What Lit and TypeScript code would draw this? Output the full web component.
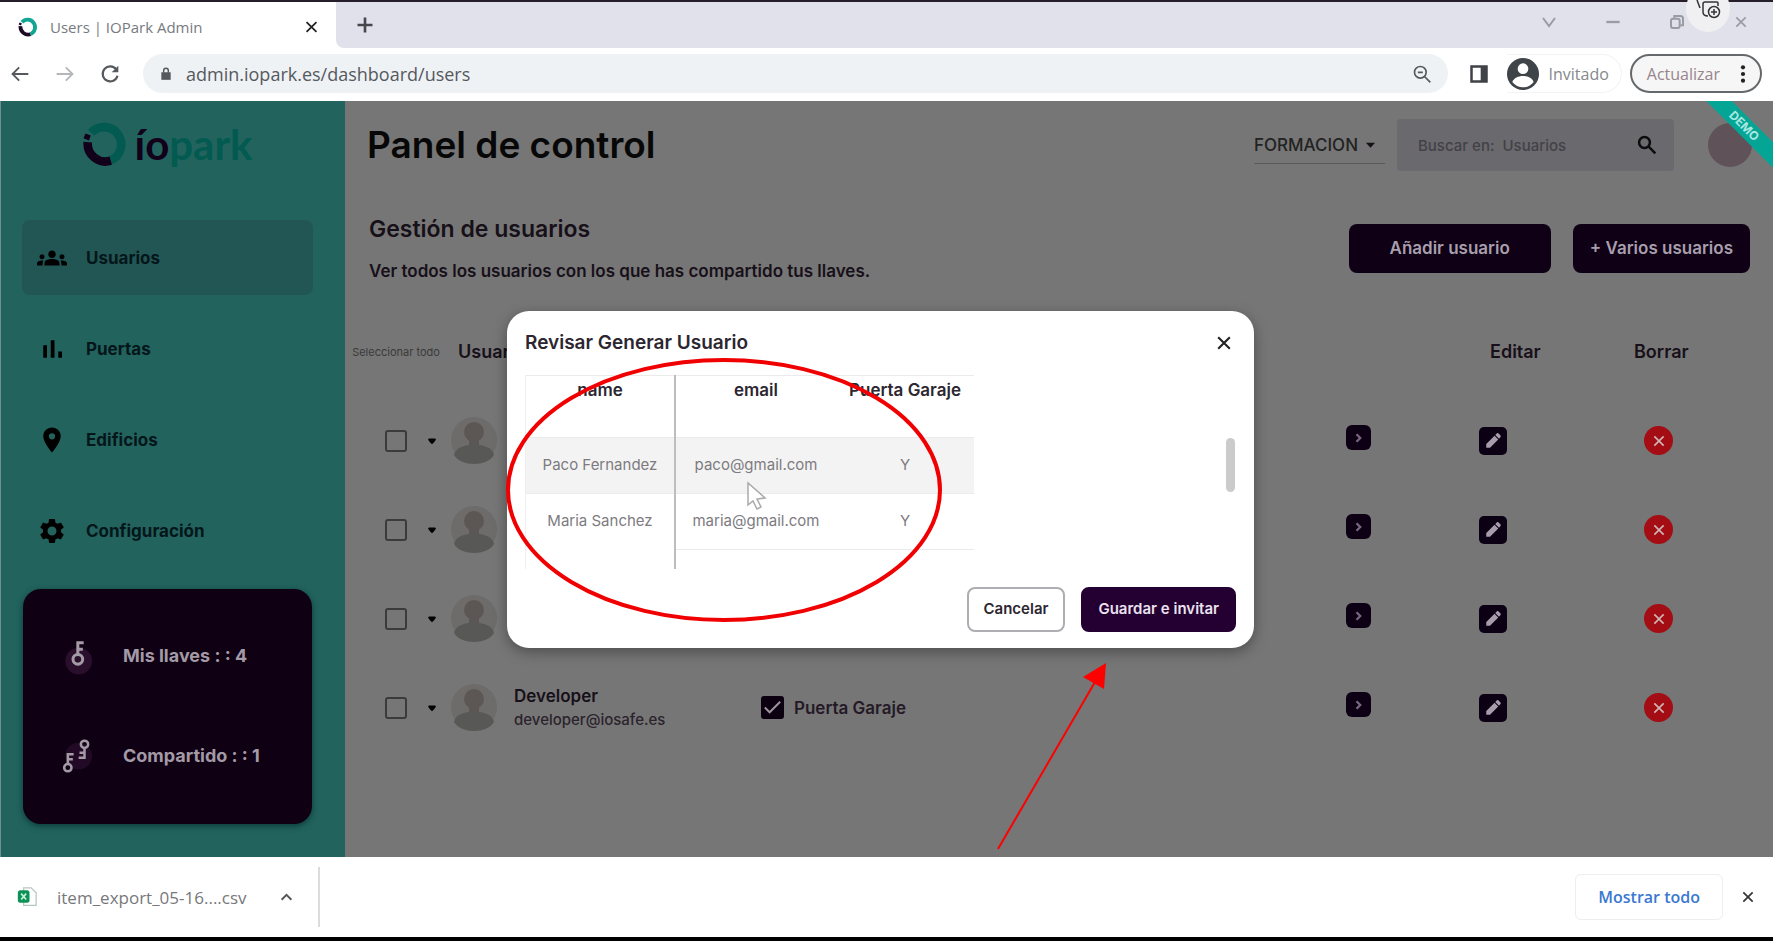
import { LitElement, html, css, svg, nothing } from "lit";
import { customElement } from "lit/decorators.js";

const NAV = [
  { label: "Usuarios", icon: "group", active: true },
  { label: "Puertas", icon: "bars", active: false },
  { label: "Edificios", icon: "pin", active: false },
  { label: "Configuración", icon: "gear", active: false },
];

const KEYS = [
  { label: "Mis llaves : : 4", icon: "key" },
  { label: "Compartido : : 1", icon: "keys" },
];

const USERS = [
  { name: "", email: "", door: "" },
  { name: "", email: "", door: "" },
  { name: "", email: "", door: "" },
  { name: "Developer", email: "developer@iosafe.es", door: "Puerta Garaje" },
];

const INVITES = [
  { name: "Paco Fernandez", email: "paco@gmail.com", door: "Y" },
  { name: "Maria Sanchez", email: "maria@gmail.com", door: "Y" },
];

const PATHS: Record<string, unknown> = {
  group: svg`<path fill="currentColor" d="M12 12.75c1.63 0 3.07.39 4.24.9 1.08.48 1.76 1.56 1.76 2.73V18H6v-1.61c0-1.18.68-2.26 1.76-2.73 1.17-.52 2.61-.91 4.24-.91zM4 13c1.100 0 2-.9 2-2s-.9-2-2-2-2 .9-2 2 .9 2 2 2zm1.130 1.100C4.760 14.040 4.390 14 4 14c-.99 0-1.930.210-2.780.580C.48 14.900 0 15.620 0 16.430V18h4.500v-1.610c0-.830.230-1.610.630-2.290zM20 13c1.100 0 2-.9 2-2s-.9-2-2-2-2 .9-2 2 .9 2 2 2zm4 3.430c0-.810-.480-1.530-1.220-1.850-.850-.370-1.790-.580-2.780-.580-.390 0-.760.040-1.130.100.400.680.630 1.460.630 2.290V18H24v-1.570zM12 6c1.660 0 3 1.340 3 3s-1.340 3-3 3-3-1.340-3-3 1.340-3 3-3z"/>`,
  bars: svg`<path fill="currentColor" d="M5 9h3v10H5zM11 5h3v14h-3zM17 14h3v5h-3z"/>`,
  pin: svg`<path fill="currentColor" d="M12 2C8.130 2 5 5.130 5 9c0 5.250 7 13 7 13s7-7.750 7-13c0-3.870-3.130-7-7-7zm0 9.500a2.500 2.500 0 1 1 0-5 2.500 2.500 0 0 1 0 5z"/>`,
  gear: svg`<path fill="currentColor" d="M19.140 12.940c.040-.3.060-.610.060-.940 0-.320-.020-.640-.070-.940l2.030-1.580c.180-.140.230-.410.120-.610l-1.920-3.320c-.120-.220-.370-.290-.590-.220l-2.390.960c-.5-.380-1.030-.7-1.620-.940l-.360-2.540c-.040-.240-.240-.410-.480-.410h-3.840c-.240 0-.430.170-.470.410l-.360 2.540c-.590.240-1.130.570-1.620.940l-2.390-.960c-.220-.080-.470 0-.590.220L2.740 8.870c-.120.210-.080.470.120.610l2.030 1.580c-.050.3-.090.630-.090.940s.020.640.070.940l-2.030 1.580c-.180.140-.230.410-.120.610l1.920 3.320c.120.220.370.290.590.220l2.390-.960c.5.380 1.030.7 1.620.940l.360 2.540c.050.240.240.410.480.410h3.840c.240 0 .440-.170.470-.410l.360-2.540c.590-.240 1.130-.560 1.620-.940l2.390.960c.220.080.470 0 .590-.220l1.920-3.320c.120-.220.070-.470-.120-.610l-2.010-1.580zM12 15.600A3.600 3.600 0 1 1 12 8.400a3.600 3.600 0 0 1 0 7.200z"/>`,
  key: svg`<circle cx="13" cy="15" r="8" fill="#2a0f2c"/><g fill="none" stroke="currentColor" stroke-width="1.800"><circle cx="12.500" cy="14" r="2.900"/><path d="M12.500 11V4h3.500M12.500 8h3"/></g>`,
  keys: svg`<circle cx="13" cy="12" r="8" fill="#220a26"/><g fill="none" stroke="currentColor" stroke-width="1.500"><circle cx="6.500" cy="19" r="2.200"/><path d="M6.500 17v-6H10M6.500 14h3"/><circle cx="16.500" cy="5" r="2.200"/><path d="M16.500 7v6H13M16.500 10h-3"/></g>`,
  close: svg`<path fill="none" stroke="currentColor" stroke-width="2.500" d="M5 5l14 14M19 5L5 19"/>`,
  plus: svg`<path fill="none" stroke="currentColor" stroke-width="3.500" d="M12 2v20M2 12h20"/>`,
  back: svg`<path fill="none" stroke="currentColor" stroke-width="2.200" d="M22 12H3M11 4l-8 8 8 8"/>`,
  forward: svg`<path fill="none" stroke="currentColor" stroke-width="2.200" d="M2 12h19M13 4l8 8-8 8"/>`,
  reload: svg`<path fill="none" stroke="currentColor" stroke-width="2.600" d="M19.500 6.500A9 9 0 1 0 21 14"/><path fill="currentColor" d="M22 2v8h-8z"/>`,
  lock: svg`<path fill="currentColor" d="M4 9h16v13H4z"/><path fill="none" stroke="currentColor" stroke-width="2.500" d="M8 10V6a4 4 0 0 1 8 0v4"/>`,
  lens: svg`<g fill="none" stroke="currentColor" stroke-width="2"><circle cx="10" cy="10" r="7"/><path d="M15 15l7 7M7 10h6"/></g>`,
  search: svg`<g fill="none" stroke="currentColor" stroke-width="3"><circle cx="9" cy="9" r="6.500"/><path d="M14 14l8 8"/></g>`,
  panel: svg`<path fill="none" stroke="currentColor" stroke-width="3" d="M3 3h18v18H3z"/><path fill="currentColor" d="M14 3h7v18h-7z"/>`,
  person: svg`<circle cx="12" cy="12" r="12" fill="currentColor"/><circle cx="12" cy="8" r="4" fill="#fff"/><path fill="#fff" d="M4 18c2-6 14-6 16 0a10 10 0 0 1-16 0z"/>`,
  dots: svg`<g fill="currentColor"><circle cx="12" cy="4" r="2.500"/><circle cx="12" cy="12" r="2.500"/><circle cx="12" cy="20" r="2.500"/></g>`,
  down: svg`<path fill="none" stroke="currentColor" stroke-width="3" d="M3 6l9 12 9-12"/>`,
  up: svg`<path fill="none" stroke="currentColor" stroke-width="3.500" d="M3 17l9-9 9 9"/>`,
  right: svg`<path fill="none" stroke="currentColor" stroke-width="3" d="M10 7l5 5-5 5"/>`,
  minus: svg`<path fill="none" stroke="currentColor" stroke-width="3.500" d="M2 12h20"/>`,
  restore: svg`<g fill="none" stroke="currentColor" stroke-width="3"><rect x="3" y="7" width="13" height="14" rx="3"/><path d="M8 6V3h9a4 4 0 0 1 4 4v10h-4"/></g>`,
  caret: svg`<path fill="currentColor" d="M2 7h20L12 18z"/>`,
  dropdown: svg`<path fill="currentColor" d="M3 8q0-2 3-2h12q3 0 3 2 0 4-9 12Q3 12 3 8z"/>`,
  pencil: svg`<path fill="currentColor" d="M3 21v-5L14 5l5 5L8 21zM15 4l2-2c1-1 2-.5 2.500 0L22 4.500c.5.500.5 1.500 0 2L20 9z"/>`,
  avatar: svg`<circle cx="24" cy="23" r="23" fill="#6d6c6b"/><circle cx="24" cy="15" r="10" fill="#5c5755"/><path fill="#5c5755" d="M19 20h10v9H19z"/><path fill="#585857" d="M4 38c2-14 38-14 40 0-7 12-33 12-40 0z"/>`,
  csv: svg`<path fill="#fff" stroke="#b9c6c0" stroke-width="1.500" d="M8 1h9l6 6v15H8z"/><rect x="1" y="4" width="14" height="15" rx="3" fill="#0d9255"/><path fill="none" stroke="#c9f0dc" stroke-width="2" d="M5 8l6 7M11 8l-6 7"/>`,
  ring: svg`<g fill="none"><path stroke="var(--ring)" stroke-width="4.500" d="M4.800 6.200A9 9 0 1 1 15 20.500"/><path stroke="var(--ring-dark)" stroke-width="4.500" d="M3 11A9.300 9.300 0 0 0 15 20.700"/><path stroke="var(--ring-dark)" stroke-width="3" d="M2.200 9.600l1-2.600"/></g>`,
};

const icon = (name: string, cls = "", box = "0 0 24 24") =>
  html`<svg class="ico ${cls}" viewBox=${box} aria-hidden="true">${PATHS[name]}</svg>`;

const base = css`
  * {
    box-sizing: border-box;
  }
  button {
    font: inherit;
    color: inherit;
    background: none;
    border: 0;
    padding: 0;
    display: inline-flex;
    align-items: center;
    justify-content: center;
  }
  a {
    color: inherit;
    text-decoration: none;
  }
  .ico {
    width: 20px;
    height: 20px;
    flex: none;
    display: block;
  }
`;

@customElement("browser-bar")
class BrowserBar extends LitElement {
  static styles = [
    base,
    css`
      :host {
        display: block;
        border-top: 2px solid #261e2b;
        font: 16px "Open Sans", sans-serif;
        color: #55585c;
      }
      .strip {
        position: relative;
        display: flex;
        height: 46px;
        background: #fff;
      }
      .tab {
        width: 336px;
        display: flex;
        align-items: center;
        padding: 4px 16px 0 18px;
        background: #fff;
        gap: 12px;
        color: #777a80;
        --ring: #12a594;
        --ring-dark: #1d0b26;
      }
      .tab-title {
        flex: 1;
        font-size: 15px;
      }
      .tab .ico {
        width: 20px;
      }
      .tab .x {
        width: 17px;
        color: #222;
      }
      .new {
        flex: 1;
        border-bottom-left-radius: 8px;
        background: #e0e1ea;
        display: flex;
        align-items: center;
        padding: 0 0 0 20px;
      }
      .new .ico {
        width: 18px;
        color: #45474c;
      }
      .win {
        display: flex;
        align-items: center;
        gap: 48px;
        padding: 0 24px 6px 0;
        background: #e0e1ea;
        color: #9a9ba3;
      }
      .win .ico {
        width: 16px;
      }
      .capture {
        position: absolute;
        right: 43px;
        top: -16px;
        width: 44px;
        height: 46px;
        border-radius: 50%;
        background: #f0f0f3;
        clip-path: inset(14px 0 0 0);
        color: #333;
      }
      .capture svg {
        width: 44px;
        height: 46px;
      }
      .tools {
        display: flex;
        align-items: center;
        height: 53px;
        padding: 0 11px 2px 10px;
        background: #fff;
      }
      .nav {
        display: flex;
        gap: 25px;
        width: 133px;
      }
      .nav .dim {
        color: #b4b6b9;
      }
      .omni {
        flex: 1;
        height: 39px;
        border-radius: 20px;
        background: #eff2f4;
        display: flex;
        align-items: center;
        padding: 0 16px;
        gap: 13px;
      }
      .omni .lock {
        width: 14px;
        height: 16px;
      }
      .url {
        flex: 1;
        min-width: 0;
        border: 0;
        background: none;
        font: 18px "Open Sans", sans-serif;
        color: #55595f;
        padding: 0;
      }
      .side {
        margin: 0 18px 0 21px;
        color: #3f4246;
      }
      .guest {
        display: flex;
        align-items: center;
        gap: 9px;
        height: 39px;
        padding-right: 12px;
        border-radius: 0 20px 20px 0;
        border: 1px solid #f3f3f3;
        border-left: 0;
        color: #85888c;
      }
      .guest .ico {
        width: 32px;
        height: 32px;
        color: #3f4449;
      }
      .update {
        height: 39px;
        margin-left: 8px;
        padding: 0 7px 0 15px;
        gap: 13px;
        border: 2px solid #66696c;
        border-radius: 20px;
        background: #f6f6f6;
        color: #96858c;
      }
      .update .ico {
        color: #222;
      }
    `,
  ];

  render() {
    return html`
      <div class="strip">
        <div class="tab">
          ${icon("ring")}<span class="tab-title">Users | IOPark Admin</span>
          <button aria-label="Cerrar pestaña">${icon("close", "x")}</button>
        </div>
        <div class="new"><button aria-label="Nueva pestaña">${icon("plus")}</button></div>
        <div class="win">
          <button aria-label="Buscar pestañas">${icon("down")}</button>
          <button aria-label="Minimizar">${icon("minus")}</button>
          <button aria-label="Restaurar">${icon("restore")}</button>
          <button aria-label="Cerrar">${icon("close")}</button>
        </div>
        <button class="capture" aria-label="Captura">
          <svg viewBox="0 0 44 46" fill="none" stroke="currentColor" stroke-width="1.500">
            <path d="M11 14l3 8M32 20v-3q0-1-1-1H19q-2 0-2 2v8q0 4 5 4" />
            <circle cx="28" cy="26" r="5.500" />
            <path d="M25 26h6M28 23v6" />
          </svg>
        </button>
      </div>
      <div class="tools">
        <div class="nav">
          <button aria-label="Atrás">${icon("back")}</button>
          <button class="dim" aria-label="Adelante">${icon("forward")}</button>
          <button aria-label="Recargar">${icon("reload")}</button>
        </div>
        <div class="omni">
          ${icon("lock", "lock")}
          <input class="url" aria-label="Dirección" value="admin.iopark.es/dashboard/users" />
          <button aria-label="Zoom">${icon("lens")}</button>
        </div>
        <button class="side" aria-label="Panel lateral">${icon("panel")}</button>
        <div class="guest">${icon("person")}<span>Invitado</span></div>
        <button class="update">Actualizar ${icon("dots")}</button>
      </div>
    `;
  }
}

@customElement("side-nav")
class SideNav extends LitElement {
  static styles = [
    base,
    css`
      :host {
        display: block;
        width: 345px;
        flex: none;
        padding: 0 32px 0 21px;
        background: #22635e;
        border-left: 1px solid #6f8f8c;
        font: 700 17px/24px Inter, sans-serif;
        color: #04161a;
      }
      .logo {
        display: flex;
        align-items: center;
        justify-content: center;
        gap: 6px;
        height: 86px;
        font: 700 42px/48px Lato, sans-serif;
        color: #12001a;
        --ring: #035a50;
        --ring-dark: #12001a;
      }
      .logo .ico {
        width: 46px;
        height: 46px;
      }
      .park {
        color: #035a50;
      }
      .menu {
        display: flex;
        flex-direction: column;
        gap: 16px;
        padding-top: 33px;
      }
      .link {
        display: flex;
        align-items: center;
        gap: 18px;
        height: 75px;
        padding: 0 14px;
        border-radius: 8px;
      }
      .link.on {
        background: #225654;
      }
      .link .ico {
        width: 32px;
        height: 30px;
        color: #000;
      }
      .card {
        margin: 21px 1px 0;
        height: 235px;
        padding: 17px 34px;
        border-radius: 18px;
        background: #100014;
        color: #a39aa6;
        font-size: 18px;
        box-shadow: 0 2px 6px #0c3a38;
      }
      .key {
        display: flex;
        align-items: center;
        gap: 26px;
        height: 100px;
        white-space: pre;
      }
      .key .ico {
        width: 40px;
        height: 40px;
      }
    `,
  ];

  render() {
    return html`
      <div class="logo">${icon("ring")}<span>ío<span class="park">park</span></span></div>
      <nav class="menu">
        ${NAV.map(
          (n) => html`<a class="link ${n.active ? "on" : ""}" href="#">${icon(n.icon)}${n.label}</a>`
        )}
      </nav>
      <div class="card">
        ${KEYS.map((k) => html`<div class="key">${icon(k.icon)}${k.label}</div>`)}
      </div>
    `;
  }
}

@customElement("user-panel")
class UserPanel extends LitElement {
  static styles = [
    base,
    css`
      :host {
        display: block;
        flex: 1;
        min-width: 0;
        background: #767676;
        font: 600 17px/20px Inter, sans-serif;
        color: #171019;
      }
      .top {
        display: flex;
        align-items: center;
        height: 88px;
        padding: 0 21px 0 22px;
      }
      h1 {
        flex: 1;
        margin: 0;
        font-size: 37px;
        font-weight: 600;
        line-height: 44px;
        color: #070707;
      }
      .pick {
        display: flex;
        align-items: center;
        width: 131px;
        height: 37px;
        margin-right: 12px;
        border-bottom: 1px solid #5a5a5a;
      }
      .pick select {
        flex: 1;
        min-width: 0;
        appearance: none;
        border: 0;
        padding: 0;
        background: none;
        font: 500 17px Inter, sans-serif;
        color: #222;
      }
      .pick .ico {
        width: 11px;
        margin-right: 9px;
      }
      .find {
        display: flex;
        align-items: center;
        width: 277px;
        height: 52px;
        margin-right: 34px;
        padding: 0 17px 0 21px;
        border-radius: 4px;
        background: #6a696d;
      }
      .find input {
        flex: 1;
        min-width: 0;
        border: 0;
        padding: 0;
        background: none;
        font: 500 15px Inter, sans-serif;
      }
      .find input::placeholder {
        color: #434147;
        opacity: 1;
      }
      .find .ico {
        color: #0c0c0c;
      }
      .me {
        width: 44px;
        height: 44px;
        border-radius: 50%;
        background: #5f5259;
      }
      .head {
        display: flex;
        align-items: center;
        gap: 22px;
        height: 118px;
        padding: 0 23px 0 24px;
      }
      .intro {
        flex: 1;
        display: flex;
        flex-direction: column;
        gap: 18px;
      }
      h2,
      p {
        margin: 0;
      }
      h2 {
        font-size: 23px;
        font-weight: 600;
        line-height: 28px;
      }
      .add {
        height: 49px;
        padding: 0 17px;
        border-radius: 8px;
        background: #100016;
        color: #a79fac;
      }
      .add.wide {
        padding: 0 41px;
      }
      table {
        width: 100%;
        table-layout: fixed;
        border-collapse: collapse;
      }
      th,
      td {
        height: 89px;
        padding: 0;
        text-align: left;
      }
      th {
        height: 89px;
        font-weight: 600;
        font-size: 18px;
      }
      .all {
        font-weight: 400;
        font-size: 11px;
        color: #3a3a3a;
        text-align: center;
      }
      .c-sel {
        width: 102px;
      }
      .c-user {
        width: 305px;
      }
      .c-go {
        width: 100px;
      }
      .c-edit {
        width: 170px;
      }
      .c-del {
        width: 195px;
      }
      .sel {
        display: flex;
        align-items: center;
        gap: 20px;
        padding-left: 40px;
      }
      .sel .ico {
        width: 10px;
        color: #000;
      }
      .box {
        appearance: none;
        width: 22px;
        height: 22px;
        margin: 0;
        border: 2px solid #3b3b3b;
        border-radius: 3px;
      }
      .who {
        display: flex;
        align-items: center;
        gap: 16px;
        padding-left: 3px;
      }
      .who .ico {
        width: 48px;
        height: 48px;
      }
      .mail {
        display: block;
        margin-top: 4px;
        font-weight: 500;
        font-size: 15px;
        color: #2b232c;
      }
      .door {
        display: flex;
        align-items: center;
        gap: 10px;
        padding-left: 9px;
        color: #241a27;
      }
      .door input {
        appearance: none;
        width: 23px;
        height: 23px;
        margin: 0;
        border-radius: 3px;
        background: #0c0010;
      }
      .tick {
        display: grid;
      }
      .tick > * {
        grid-area: 1 / 1;
      }
      .tick svg {
        width: 23px;
        height: 23px;
        color: #9c949c;
      }
      .user-h {
        padding-left: 11px;
      }
      .edit-h {
        padding-left: 82px;
      }
      .del-h {
        padding-left: 56px;
      }
      .mid {
        text-align: center;
      }
      .go {
        width: 25px;
        height: 25px;
        margin-bottom: 6px;
        border-radius: 6px;
        background: #0e0014;
        color: #7b6680;
      }
      .go .ico {
        width: 18px;
      }
      .edit {
        width: 28px;
        height: 28px;
        border-radius: 5px;
        background: #0c0014;
        color: #a59dab;
      }
      .edit .ico,
      .del .ico {
        width: 18px;
        height: 18px;
      }
      .del-c {
        padding-left: 66px;
      }
      .del {
        width: 29px;
        height: 29px;
        border-radius: 50%;
        background: #a30d13;
        color: #cfb4b4;
      }
      .del .ico {
        width: 16px;
        stroke-width: 3;
      }
    `,
  ];

  render() {
    return html`
      <div class="top">
        <h1>Panel de control</h1>
        <div class="pick">
          <select aria-label="Grupo">
            <option>FORMACION</option>
          </select>
          ${icon("caret")}
        </div>
        <div class="find">
          <input aria-label="Buscar" placeholder="Buscar en:  Usuarios" />
          <button aria-label="Buscar">${icon("search")}</button>
        </div>
        <div class="me"></div>
      </div>
      <div class="head">
        <div class="intro">
          <h2>Gestión de usuarios</h2>
          <p>Ver todos los usuarios con los que has compartido tus llaves.</p>
        </div>
        <button class="add wide">Añadir usuario</button>
        <button class="add">+ Varios usuarios</button>
      </div>
      <table>
        <colgroup>
          <col class="c-sel" />
          <col class="c-user" />
          <col />
          <col class="c-go" />
          <col class="c-edit" />
          <col class="c-del" />
        </colgroup>
        <thead>
          <tr>
            <th class="all">Seleccionar todo</th>
            <th class="user-h">Usuario</th>
            <th></th>
            <th></th>
            <th class="edit-h">Editar</th>
            <th class="del-h">Borrar</th>
          </tr>
        </thead>
        <tbody>
          ${USERS.map(
            (u) => html`<tr>
              <td>
                <div class="sel">
                  <input class="box" type="checkbox" aria-label="Seleccionar usuario" />${icon("dropdown")}
                </div>
              </td>
              <td>
                <div class="who">
                  ${icon("avatar", "", "0 0 48 48")}
                  ${u.name ? html`<div>${u.name}<span class="mail">${u.email}</span></div>` : nothing}
                </div>
              </td>
              <td>
                ${u.door
                  ? html`<label class="door">
                      <span class="tick">
                        <input type="checkbox" checked />
                        <svg viewBox="0 0 24 24" fill="none" stroke="currentColor" stroke-width="2">
                          <path d="M4 12l5 5L20 6" />
                        </svg>
                      </span>
                      ${u.door}
                    </label>`
                  : nothing}
              </td>
              <td class="mid"><button class="go" aria-label="Ver">${icon("right")}</button></td>
              <td class="mid"><button class="edit" aria-label="Editar">${icon("pencil")}</button></td>
              <td class="del-c"><button class="del" aria-label="Borrar">${icon("close")}</button></td>
            </tr>`
          )}
        </tbody>
      </table>
    `;
  }
}

@customElement("invite-dialog")
class InviteDialog extends LitElement {
  static styles = [
    base,
    css`
      :host {
        position: relative;
        display: block;
        width: 747px;
        padding: 18px 18px 16px;
        border-radius: 22px;
        background: #fff;
        box-shadow: 0 4px 14px rgba(0, 0, 0, 0.35);
        font: 600 15px/20px Inter, sans-serif;
        color: #2c2630;
      }
      .bar {
        display: flex;
        justify-content: space-between;
        align-items: center;
        height: 28px;
        padding-right: 2px;
      }
      h3 {
        margin: 0;
        font-size: 19px;
        font-weight: 600;
        line-height: 28px;
      }
      .bar .ico {
        color: #222;
      }
      .body {
        display: flex;
        justify-content: space-between;
        align-items: flex-start;
        height: 194px;
        margin: 18px 0;
        padding-right: 1px;
      }
      .grid {
        height: 194px;
        border-left: 1px solid #eee;
      }
      table {
        width: 448px;
        height: 194px;
        table-layout: fixed;
        border-collapse: collapse;
      }
      th,
      td {
        padding: 0;
        text-align: center;
        border-top: 1px solid #ebebeb;
      }
      th {
        height: 62px;
        padding-top: 4px;
        vertical-align: top;
        font-weight: 600;
        font-size: 17px;
      }
      td {
        height: 56px;
        font-weight: 400;
        font-size: 15px;
        color: #7d7b7f;
      }
      tr > :first-child {
        border-right: 2px solid #bdbdbd;
      }
      .c1 {
        width: 149px;
      }
      .c2 {
        width: 161px;
      }
      .hover {
        background: #f3f3f3;
      }
      .rest td {
        height: 20px;
      }
      .rest td:first-child {
        border-top-color: #fff;
      }
      .thumb {
        width: 9px;
        height: 54px;
        margin-top: 63px;
        border-radius: 5px;
        background: #cbcbcb;
      }
      .acts {
        display: flex;
        justify-content: flex-end;
        gap: 16px;
      }
      .acts button {
        height: 45px;
        border: 2px solid #b0adb2;
        border-radius: 8px;
        padding: 0 15px;
      }
      .acts .main {
        border-color: #240032;
        background: #240032;
        color: #eae2ee;
      }
      .mark {
        position: absolute;
        left: 0;
        top: 0;
        width: 747px;
        height: 550px;
        overflow: visible;
        pointer-events: none;
      }
    `,
  ];

  render() {
    return html`
      <div class="bar">
        <h3>Revisar Generar Usuario</h3>
        <button aria-label="Cerrar">${icon("close")}</button>
      </div>
      <div class="body">
        <div class="grid">
          <table>
            <colgroup>
              <col class="c1" />
              <col class="c2" />
              <col />
            </colgroup>
            <thead>
              <tr>
                <th>name</th>
                <th>email</th>
                <th>Puerta Garaje</th>
              </tr>
            </thead>
            <tbody>
              ${INVITES.map(
                (r, i) => html`<tr class=${i === 0 ? "hover" : ""}>
                  <td>${r.name}</td>
                  <td>${r.email}</td>
                  <td>${r.door}</td>
                </tr>`
              )}
              <tr class="rest">
                <td></td>
                <td></td>
                <td></td>
              </tr>
            </tbody>
          </table>
        </div>
        <div class="thumb"></div>
      </div>
      <div class="acts">
        <button>Cancelar</button>
        <button class="main">Guardar e invitar</button>
      </div>
      <svg class="mark" viewBox="0 0 747 550" aria-hidden="true">
        <path d="M241 172v22l5-4 4 8 4-2-4-8 8-1z" fill="#fff" stroke="#aaa" stroke-width="1.500" />
        <ellipse cx="217" cy="179" rx="216" ry="130" fill="none" stroke="#f00000" stroke-width="4" />
        <path d="M491 538L588 371" stroke="#fe0000" stroke-width="2" />
        <path d="M599 352l-23 14 21 12z" fill="#fe0000" />
      </svg>
    `;
  }
}

@customElement("app-root")
class AppRoot extends LitElement {
  static styles = [
    base,
    css`
      :host {
        display: flex;
        flex-direction: column;
        min-height: 100vh;
        background: #fff;
      }
      .page {
        position: relative;
        flex: 1;
        display: flex;
        overflow: hidden;
      }
      .layer {
        position: absolute;
        inset: 0;
        display: flex;
        align-items: center;
        justify-content: center;
        padding-right: 12px;
      }
      .ribbon {
        position: absolute;
        right: -36px;
        top: 16px;
        width: 130px;
        height: 18px;
        transform: rotate(45deg);
        background: #05a596;
        color: #a9e8e0;
        font: 700 12px/18px Inter, sans-serif;
        text-align: center;
      }
      .shelf {
        display: flex;
        align-items: center;
        height: 84px;
        padding: 0 17px;
        border-bottom: 4px solid #000;
        background: #fff;
        font: 17px "Open Sans", sans-serif;
        color: #77787b;
      }
      .file {
        display: flex;
        align-items: center;
        gap: 20px;
        width: 303px;
        height: 60px;
        border-right: 2px solid #dcdcdc;
      }
      .name {
        width: 203px;
        white-space: nowrap;
      }
      .file .ico {
        width: 20px;
      }
      .file .up {
        width: 13px;
        color: #555;
      }
      .gap {
        flex: 1;
      }
      .show {
        height: 46px;
        margin-right: 17px;
        padding: 0 22px;
        border: 1px solid #eee;
        border-radius: 6px;
        color: #3a79cf;
        font-weight: 600;
        font-size: 16px;
      }
      .shelf .x {
        width: 16px;
        color: #333;
      }
    `,
  ];

  render() {
    return html`
      <browser-bar></browser-bar>
      <div class="page">
        <side-nav></side-nav>
        <user-panel></user-panel>
        <div class="layer"><invite-dialog></invite-dialog></div>
        <div class="ribbon">DEMO</div>
      </div>
      <div class="shelf">
        <div class="file">
          ${icon("csv")}<span class="name">item_export_05-16....csv</span>
          <button aria-label="Opciones">${icon("up", "up")}</button>
        </div>
        <div class="gap"></div>
        <button class="show">Mostrar todo</button>
        <button aria-label="Cerrar">${icon("close", "x")}</button>
      </div>
    `;
  }
}
